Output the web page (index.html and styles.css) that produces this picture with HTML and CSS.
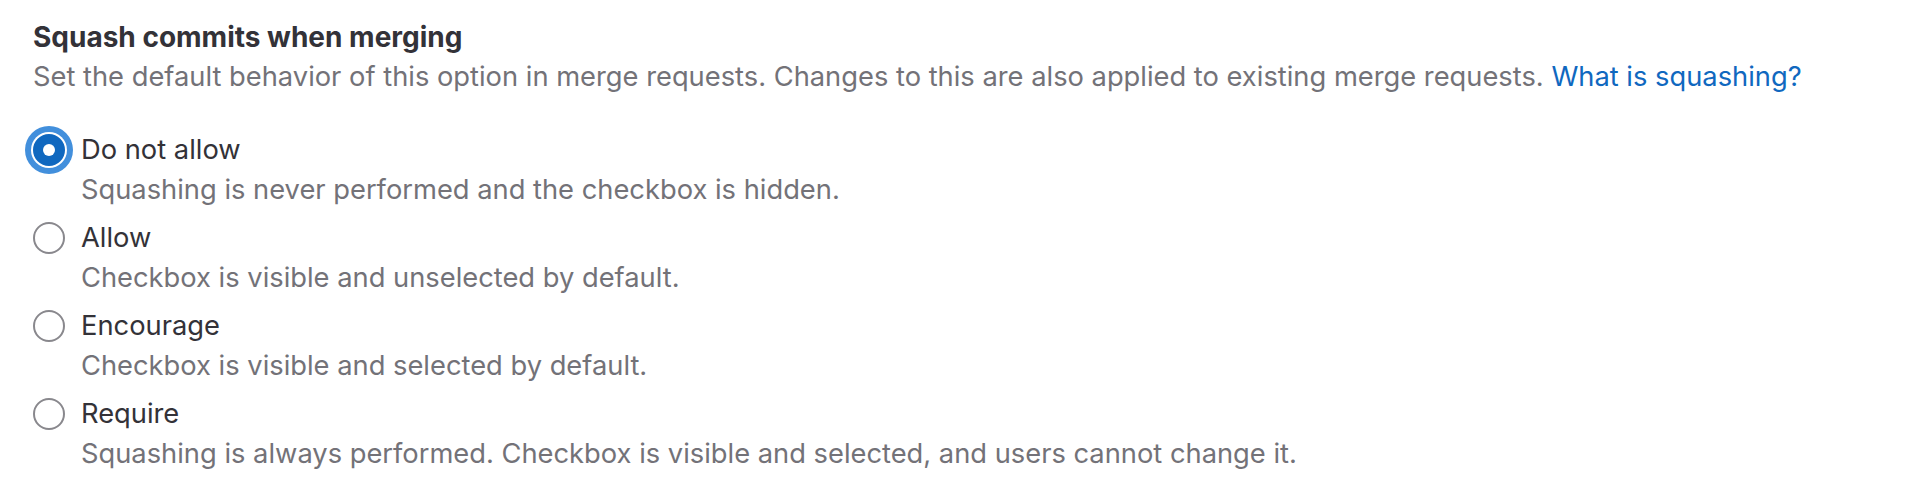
FILE: index.html
```html
<!DOCTYPE html>
<html lang="en">
<head>
<meta charset="utf-8">
<title>Squash commits when merging</title>
<link rel="stylesheet" href="styles.css">
</head>
<body>
<div class="setting">
  <div class="setting-title">Squash commits when merging</div>
  <p class="setting-help">Set the default behavior of this option in merge requests. Changes to this are also applied to existing merge requests. <a class="link" href="#">What is squashing?</a></p>
  <div class="options">
    <label class="option">
      <span class="radio-cell"><span class="radio radio-checked"></span></span>
      <span class="option-text">
        <span class="option-label">Do not allow</span>
        <span class="option-help">Squashing is never performed and the checkbox is hidden.</span>
      </span>
    </label>
    <label class="option">
      <span class="radio-cell"><span class="radio"></span></span>
      <span class="option-text">
        <span class="option-label">Allow</span>
        <span class="option-help">Checkbox is visible and unselected by default.</span>
      </span>
    </label>
    <label class="option">
      <span class="radio-cell"><span class="radio"></span></span>
      <span class="option-text">
        <span class="option-label">Encourage</span>
        <span class="option-help">Checkbox is visible and selected by default.</span>
      </span>
    </label>
    <label class="option">
      <span class="radio-cell"><span class="radio"></span></span>
      <span class="option-text">
        <span class="option-label">Require</span>
        <span class="option-help">Squashing is always performed. Checkbox is visible and selected, and users cannot change it.</span>
      </span>
    </label>
  </div>
</div>
</body>
</html>
```
FILE: styles.css
```css
html, body {
  margin: 0;
  padding: 0;
  background: #ffffff;
}

body {
  font-family: Inter, "Noto Sans", "Liberation Sans", sans-serif;
  font-size: 27.3px;
  color: #333238;
}

.setting {
  padding: 17px 0 0 33px;
}

.setting-title {
  font-size: 28px;
  font-weight: 700;
  line-height: 40px;
  color: #333238;
}

.setting-help {
  margin: 0;
  line-height: 40px;
  color: #737278;
}

.link {
  color: #1068bf;
  text-decoration: none;
}

.options {
  margin-top: 32.5px;
  display: flex;
  flex-direction: column;
  gap: 8.3px;
}

.option {
  display: flex;
  align-items: flex-start;
  gap: 16px;
}

.radio-cell {
  height: 40px;
  display: flex;
  align-items: center;
}

.radio {
  box-sizing: border-box;
  width: 32px;
  height: 32px;
  border-radius: 50%;
  border: 2px solid #89888d;
  background: #ffffff;
  display: flex;
  align-items: center;
  justify-content: center;
}

.radio-checked {
  border-color: #1068bf;
  background: #1068bf;
  box-shadow: 0 0 0 2px #ffffff, 0 0 0 8px #428fdc;
}

.radio-checked::after {
  content: "";
  width: 12px;
  height: 12px;
  border-radius: 50%;
  background: #ffffff;
}

.option-text {
  display: flex;
  flex-direction: column;
}

.option-label {
  line-height: 40px;
  color: #333238;
}

.option-help {
  line-height: 40px;
  color: #737278;
}
```
